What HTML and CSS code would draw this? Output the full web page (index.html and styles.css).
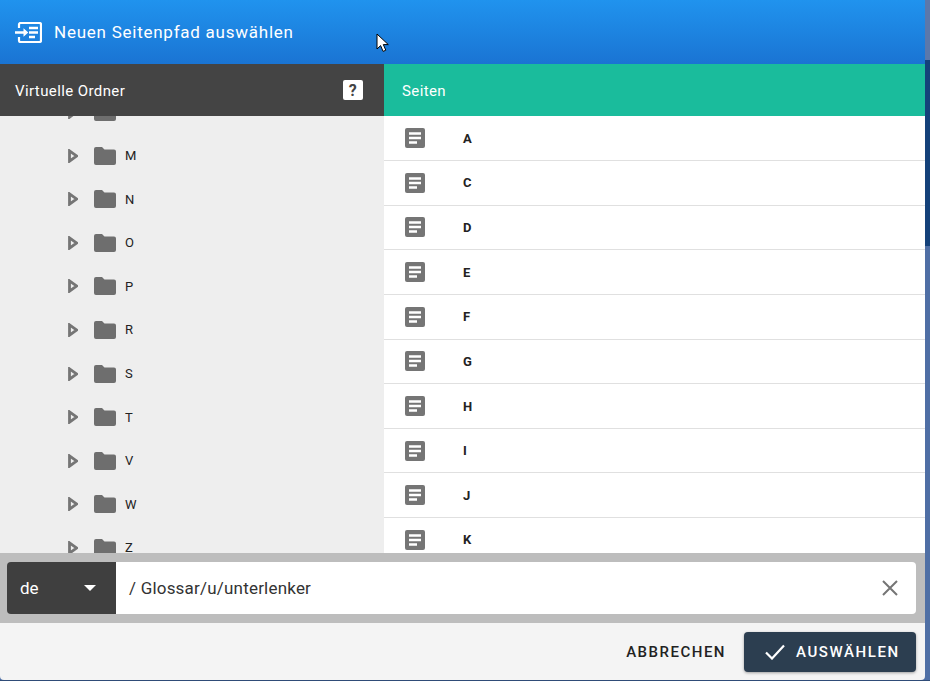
FILE: index.html
```html
<!DOCTYPE html>
<html lang="de">
<head>
<meta charset="utf-8">
<title>Neuen Seitenpfad auswählen</title>
<link rel="stylesheet" href="styles.css">
</head>
<body>
<div class="backdrop">
<section class="dialog">
  <header class="title-bar">
    <svg class="title-icon" viewBox="0 0 27 21" width="27" height="21"><path d="M4 6V2.500A1.500 1.500 0 0 1 5.500 1h19A1.500 1.500 0 0 1 26 2.500v16a1.500 1.500 0 0 1-1.500 1.500h-19A1.500 1.500 0 0 1 4 18.500V15" fill="none" stroke="#fff" stroke-width="2.200"/><path d="M0 9.200h8.500V6.300l4.800 4.200-4.800 4.200v-2.900H0z" fill="#fff"/><path d="M14 4.800h9v2.400h-9zM14 9.300h9v2.400h-9zM14 13.800h6v2.400h-6z" fill="#fff"/></svg>
    <h1 class="title">Neuen Seitenpfad auswählen</h1>
    <svg class="cursor" viewBox="0 0 13 20" width="13" height="20"><path d="M1 1v15l3.600-3.400 2.500 5.800 2.700-1.200-2.500-5.600h5z" fill="#fff" stroke="#000" stroke-width="1"/></svg>
  </header>
  <div class="columns">
    <div class="pane pane-left">
      <div class="pane-head head-dark">
        <span class="head-label">Virtuelle Ordner</span>
        <span class="help">?</span>
      </div>
      <div class="tree-scroll">
        <ul class="tree">
          <li class="tree-row"><svg class="caret" viewBox="0 0 10 14"><path d="M1.500 1.800 8.500 7l-7 5.200z" fill="none" stroke="#757575" stroke-width="2.800"/></svg><svg class="folder" viewBox="0 0 22 18"><path d="M2 0h6l2.500 2.500H20a2 2 0 0 1 2 2V16a2 2 0 0 1-2 2H2a2 2 0 0 1-2-2V2a2 2 0 0 1 2-2z" fill="#6e6e6e"/></svg><span class="tree-label tree-label-hidden">L</span></li>
          <li class="tree-row"><svg class="caret" viewBox="0 0 10 14"><path d="M1.500 1.800 8.500 7l-7 5.200z" fill="none" stroke="#757575" stroke-width="2.800"/></svg><svg class="folder" viewBox="0 0 22 18"><path d="M2 0h6l2.500 2.500H20a2 2 0 0 1 2 2V16a2 2 0 0 1-2 2H2a2 2 0 0 1-2-2V2a2 2 0 0 1 2-2z" fill="#6e6e6e"/></svg><span class="tree-label">M</span></li>
          <li class="tree-row"><svg class="caret" viewBox="0 0 10 14"><path d="M1.500 1.800 8.500 7l-7 5.200z" fill="none" stroke="#757575" stroke-width="2.800"/></svg><svg class="folder" viewBox="0 0 22 18"><path d="M2 0h6l2.500 2.500H20a2 2 0 0 1 2 2V16a2 2 0 0 1-2 2H2a2 2 0 0 1-2-2V2a2 2 0 0 1 2-2z" fill="#6e6e6e"/></svg><span class="tree-label">N</span></li>
          <li class="tree-row"><svg class="caret" viewBox="0 0 10 14"><path d="M1.500 1.800 8.500 7l-7 5.200z" fill="none" stroke="#757575" stroke-width="2.800"/></svg><svg class="folder" viewBox="0 0 22 18"><path d="M2 0h6l2.500 2.500H20a2 2 0 0 1 2 2V16a2 2 0 0 1-2 2H2a2 2 0 0 1-2-2V2a2 2 0 0 1 2-2z" fill="#6e6e6e"/></svg><span class="tree-label">O</span></li>
          <li class="tree-row"><svg class="caret" viewBox="0 0 10 14"><path d="M1.500 1.800 8.500 7l-7 5.200z" fill="none" stroke="#757575" stroke-width="2.800"/></svg><svg class="folder" viewBox="0 0 22 18"><path d="M2 0h6l2.500 2.500H20a2 2 0 0 1 2 2V16a2 2 0 0 1-2 2H2a2 2 0 0 1-2-2V2a2 2 0 0 1 2-2z" fill="#6e6e6e"/></svg><span class="tree-label">P</span></li>
          <li class="tree-row"><svg class="caret" viewBox="0 0 10 14"><path d="M1.500 1.800 8.500 7l-7 5.200z" fill="none" stroke="#757575" stroke-width="2.800"/></svg><svg class="folder" viewBox="0 0 22 18"><path d="M2 0h6l2.500 2.500H20a2 2 0 0 1 2 2V16a2 2 0 0 1-2 2H2a2 2 0 0 1-2-2V2a2 2 0 0 1 2-2z" fill="#6e6e6e"/></svg><span class="tree-label">R</span></li>
          <li class="tree-row"><svg class="caret" viewBox="0 0 10 14"><path d="M1.500 1.800 8.500 7l-7 5.200z" fill="none" stroke="#757575" stroke-width="2.800"/></svg><svg class="folder" viewBox="0 0 22 18"><path d="M2 0h6l2.500 2.500H20a2 2 0 0 1 2 2V16a2 2 0 0 1-2 2H2a2 2 0 0 1-2-2V2a2 2 0 0 1 2-2z" fill="#6e6e6e"/></svg><span class="tree-label">S</span></li>
          <li class="tree-row"><svg class="caret" viewBox="0 0 10 14"><path d="M1.500 1.800 8.500 7l-7 5.200z" fill="none" stroke="#757575" stroke-width="2.800"/></svg><svg class="folder" viewBox="0 0 22 18"><path d="M2 0h6l2.500 2.500H20a2 2 0 0 1 2 2V16a2 2 0 0 1-2 2H2a2 2 0 0 1-2-2V2a2 2 0 0 1 2-2z" fill="#6e6e6e"/></svg><span class="tree-label">T</span></li>
          <li class="tree-row"><svg class="caret" viewBox="0 0 10 14"><path d="M1.500 1.800 8.500 7l-7 5.200z" fill="none" stroke="#757575" stroke-width="2.800"/></svg><svg class="folder" viewBox="0 0 22 18"><path d="M2 0h6l2.500 2.500H20a2 2 0 0 1 2 2V16a2 2 0 0 1-2 2H2a2 2 0 0 1-2-2V2a2 2 0 0 1 2-2z" fill="#6e6e6e"/></svg><span class="tree-label">V</span></li>
          <li class="tree-row"><svg class="caret" viewBox="0 0 10 14"><path d="M1.500 1.800 8.500 7l-7 5.200z" fill="none" stroke="#757575" stroke-width="2.800"/></svg><svg class="folder" viewBox="0 0 22 18"><path d="M2 0h6l2.500 2.500H20a2 2 0 0 1 2 2V16a2 2 0 0 1-2 2H2a2 2 0 0 1-2-2V2a2 2 0 0 1 2-2z" fill="#6e6e6e"/></svg><span class="tree-label">W</span></li>
          <li class="tree-row"><svg class="caret" viewBox="0 0 10 14"><path d="M1.500 1.800 8.500 7l-7 5.200z" fill="none" stroke="#757575" stroke-width="2.800"/></svg><svg class="folder" viewBox="0 0 22 18"><path d="M2 0h6l2.500 2.500H20a2 2 0 0 1 2 2V16a2 2 0 0 1-2 2H2a2 2 0 0 1-2-2V2a2 2 0 0 1 2-2z" fill="#6e6e6e"/></svg><span class="tree-label">Z</span></li>
        </ul>
      </div>
    </div>
    <div class="pane pane-right">
      <div class="pane-head head-green"><span class="head-label">Seiten</span></div>
      <ul class="pages">
        <li class="page-row"><svg class="doc" viewBox="0 0 20 20"><rect width="20" height="20" rx="2" fill="#757575"/><path d="M4 4.300h12v2.400H4zM4 8.800h12v2.400H4zM4 13.300h8v2.400H4z" fill="#fff"/></svg><span class="page-label">A</span></li>
        <li class="page-row"><svg class="doc" viewBox="0 0 20 20"><rect width="20" height="20" rx="2" fill="#757575"/><path d="M4 4.300h12v2.400H4zM4 8.800h12v2.400H4zM4 13.300h8v2.400H4z" fill="#fff"/></svg><span class="page-label">C</span></li>
        <li class="page-row"><svg class="doc" viewBox="0 0 20 20"><rect width="20" height="20" rx="2" fill="#757575"/><path d="M4 4.300h12v2.400H4zM4 8.800h12v2.400H4zM4 13.300h8v2.400H4z" fill="#fff"/></svg><span class="page-label">D</span></li>
        <li class="page-row"><svg class="doc" viewBox="0 0 20 20"><rect width="20" height="20" rx="2" fill="#757575"/><path d="M4 4.300h12v2.400H4zM4 8.800h12v2.400H4zM4 13.300h8v2.400H4z" fill="#fff"/></svg><span class="page-label">E</span></li>
        <li class="page-row"><svg class="doc" viewBox="0 0 20 20"><rect width="20" height="20" rx="2" fill="#757575"/><path d="M4 4.300h12v2.400H4zM4 8.800h12v2.400H4zM4 13.300h8v2.400H4z" fill="#fff"/></svg><span class="page-label">F</span></li>
        <li class="page-row"><svg class="doc" viewBox="0 0 20 20"><rect width="20" height="20" rx="2" fill="#757575"/><path d="M4 4.300h12v2.400H4zM4 8.800h12v2.400H4zM4 13.300h8v2.400H4z" fill="#fff"/></svg><span class="page-label">G</span></li>
        <li class="page-row"><svg class="doc" viewBox="0 0 20 20"><rect width="20" height="20" rx="2" fill="#757575"/><path d="M4 4.300h12v2.400H4zM4 8.800h12v2.400H4zM4 13.300h8v2.400H4z" fill="#fff"/></svg><span class="page-label">H</span></li>
        <li class="page-row"><svg class="doc" viewBox="0 0 20 20"><rect width="20" height="20" rx="2" fill="#757575"/><path d="M4 4.300h12v2.400H4zM4 8.800h12v2.400H4zM4 13.300h8v2.400H4z" fill="#fff"/></svg><span class="page-label">I</span></li>
        <li class="page-row"><svg class="doc" viewBox="0 0 20 20"><rect width="20" height="20" rx="2" fill="#757575"/><path d="M4 4.300h12v2.400H4zM4 8.800h12v2.400H4zM4 13.300h8v2.400H4z" fill="#fff"/></svg><span class="page-label">J</span></li>
        <li class="page-row"><svg class="doc" viewBox="0 0 20 20"><rect width="20" height="20" rx="2" fill="#757575"/><path d="M4 4.300h12v2.400H4zM4 8.800h12v2.400H4zM4 13.300h8v2.400H4z" fill="#fff"/></svg><span class="page-label">K</span></li>
      </ul>
    </div>
  </div>
  <div class="path-bar">
    <div class="lang"><span>de</span><svg class="lang-caret" viewBox="0 0 12 6" width="12" height="6"><path d="M0 0h12L6 6z" fill="#fff"/></svg></div>
    <div class="path-field">
      <span class="path-text">/ Glossar/u/unterlenker</span>
      <svg class="clear" viewBox="0 0 16 16" width="16" height="16"><path d="M1 1l14 14M15 1 1 15" stroke="#757575" stroke-width="2" fill="none"/></svg>
    </div>
  </div>
  <footer class="actions">
    <button class="btn btn-text">ABBRECHEN</button>
    <button class="btn btn-primary"><svg viewBox="0 0 20 16" width="20" height="16"><path d="M1 8.500 7 14.500 19 1.500" fill="none" stroke="#fff" stroke-width="2.200"/></svg>AUSWÄHLEN</button>
  </footer>
</section>
</div>
</body>
</html>
```

FILE: styles.css
```css
* { box-sizing: border-box; }
html, body { margin: 0; height: 100%; overflow: hidden; }
body { font-family: Roboto, "Liberation Sans", sans-serif; background: #4f6fa5; }
.backdrop { height: 681px; width: 930px; background: linear-gradient(#5b78ab 0, #5b78ab 60px, #14417a 60px, #14417a 246px, #4f6fa5 246px, #4f6fa5 680px, #2f4c78 680px); }
.dialog { width: 925px; height: 680px; display: flex; flex-direction: column; background: #f4f4f4; border-radius: 0 0 4px 4px; overflow: hidden; }
.title-bar { position: relative; height: 64px; flex: none; display: flex; align-items: center; padding-left: 15px; color: #fff; background: linear-gradient(#2093ee, #1a74d3); }
.title-icon { flex: none; margin-right: 12px; }
.title { margin: 0; font-size: 17px; font-weight: 400; letter-spacing: 0.75px; }
.cursor { position: absolute; left: 376px; top: 33px; }
.columns { height: 489px; flex: none; display: flex; min-height: 0; }
.pane { display: flex; flex-direction: column; min-height: 0; }
.pane-left { width: 384px; flex: none; background: #eeeeee; }
.pane-right { flex: 1; background: #fff; }
.pane-head { height: 52px; flex: none; display: flex; align-items: center; justify-content: space-between; font-size: 15px; color: #fff; letter-spacing: 0.4px; }
.head-label { padding-top: 1px; }
.head-dark { background: #444444; padding: 0 21px 0 15px; }
.head-green { background: #1abc9c; padding: 0 18px; }
.help { width: 20px; height: 20px; border-radius: 2px; background: #fff; color: #444; font-size: 16px; font-weight: 700; display: flex; align-items: center; justify-content: center; }
.tree-scroll { flex: 1; overflow: hidden; }
.tree { list-style: none; margin: -25.8px 0 0; padding: 0 0 0 68px; }
.tree-row { height: 43.6px; display: flex; align-items: center; }
.caret { width: 10px; height: 14px; flex: none; margin-right: 16px; }
.folder { width: 22px; height: 18px; flex: none; margin-right: 9px; }
.tree-label { font-size: 13px; color: #222; letter-spacing: 0.2px; }
.tree-label-hidden { visibility: hidden; }
.pages { list-style: none; margin: 0; padding: 0.35px 0 0; flex: 1; overflow: hidden; }
.page-row { height: 44.65px; display: flex; align-items: center; padding-left: 21px; border-bottom: 1px solid #e0e0e0; }
.doc { width: 20px; height: 20px; flex: none; margin-right: 38px; }
.page-label { font-size: 13px; font-weight: 700; color: #222; }
.path-bar { height: 70px; flex: none; background: #bdbdbd; display: flex; padding: 9px 9px 9px 7px; }
.lang { width: 109px; background: #3f3f3f; color: #fff; border-radius: 4px 0 0 4px; display: flex; align-items: center; justify-content: space-between; padding: 0 20px 0 13px; font-size: 17px; }
.path-field { flex: 1; background: #fff; border-radius: 0 4px 4px 0; display: flex; align-items: center; justify-content: space-between; padding: 0 18px 0 13px; }
.path-text { font-size: 17px; color: #333; letter-spacing: 0.2px; }
.actions { flex: 1; display: flex; align-items: center; justify-content: flex-end; gap: 18px; padding: 0 9px 0 0; }
.btn { font-family: inherit; font-size: 15px; font-weight: 500; letter-spacing: 1.5px; border: 0; cursor: pointer; }
.btn-text { background: none; color: #222; padding: 0; }
.btn-primary { width: 172px; height: 40px; background: #2c3e50; color: #fff; border-radius: 4px; display: flex; align-items: center; gap: 11px; padding: 0 0 0 21px; letter-spacing: 1.6px; box-shadow: 0 1px 3px rgba(0,0,0,.35); }
```
